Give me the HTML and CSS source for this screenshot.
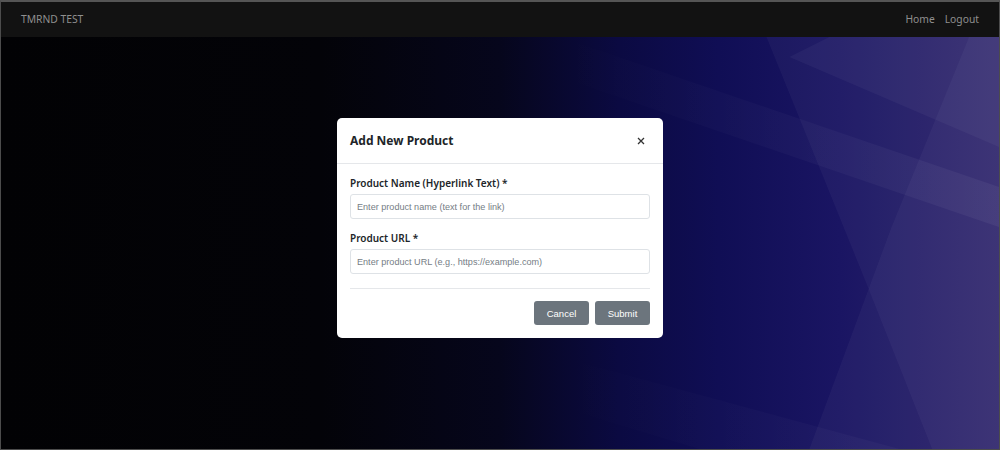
FILE: index.html
```html
<!DOCTYPE html>
<html lang="en">
<head>
  <meta charset="UTF-8">
  <meta name="viewport" content="width=device-width, initial-scale=1.0">
  <title>TMRND TEST - Products</title>
  <link rel="stylesheet" href="styles.css">
</head>
<body>
  <div class="frame">
    <nav class="navbar">
      <a href="#" class="brand">TMRND TEST</a>
      <div class="nav-links">
        <a href="#">Home</a>
        <a href="#">Logout</a>
      </div>
    </nav>
    <main class="stage">
      <!-- decorative background facets -->
      <svg class="facets" viewBox="0 0 1000 412" preserveAspectRatio="none" aria-hidden="true">
        <defs>
          <linearGradient id="fadeLeft" x1="0" y1="0" x2="1" y2="0">
            <stop offset="0" stop-color="#fff" stop-opacity="0"/>
            <stop offset="1" stop-color="#fff" stop-opacity="1"/>
          </linearGradient>
        </defs>
        <polygon points="767,0 1000,0 1000,412 933,412 867,246" fill="#ffffff" opacity="0.035"/>
        <polygon points="970,0 1000,0 1000,412 810,412 892,191" fill="#ffffff" opacity="0.035"/>
        <polygon points="560,0 1000,150 1000,190 560,40" fill="url(#fadeLeft)" opacity="0.05"/>
        <polygon points="830,0 1000,0 1000,110 790,20" fill="#ffffff" opacity="0.04"/>
        <polygon points="560,320 900,412 700,412 560,370" fill="url(#fadeLeft)" opacity="0.03"/>
      </svg>

      <div class="modal">
        <div class="modal-header">
          <h5 class="modal-title">Add New Product</h5>
          <button class="close-btn" aria-label="Close">
            <svg width="8" height="8" viewBox="0 0 8 8"><path d="M1 1L7 7M7 1L1 7" stroke="#333" stroke-width="1.3"/></svg>
          </button>
        </div>
        <form class="modal-body">
          <div class="field">
            <label for="productName">Product Name (Hyperlink Text) *</label>
            <input type="text" id="productName" placeholder="Enter product name (text for the link)">
          </div>
          <div class="field">
            <label for="productUrl">Product URL *</label>
            <input type="text" id="productUrl" placeholder="Enter product URL (e.g., https://example.com)">
          </div>
          <div class="form-actions">
            <button type="button" class="btn">Cancel</button>
            <button type="submit" class="btn">Submit</button>
          </div>
        </form>
      </div>
    </main>
  </div>
</body>
</html>
```

FILE: styles.css
```css
body {
  margin: 0;
  padding: 0;
  font-family: "Noto Sans", "Open Sans", Arial, sans-serif;
  background: #000;
}
.frame {
  width: 1000px;
  height: 450px;
  box-sizing: border-box;
  border: 1px solid #4c4c4c;
  border-top: 2px solid #555;
  display: flex;
  flex-direction: column;
  overflow: hidden;
}
.navbar {
  height: 35px;
  flex-shrink: 0;
  background-color: #121212;
  display: flex;
  align-items: center;
  justify-content: space-between;
  padding: 0 20px;
  line-height: 1;
}
.navbar a {
  text-decoration: none;
  color: #8f8f8f;
  font-size: 10.3px;
}
.nav-links {
  display: flex;
  gap: 10px;
}
.stage {
  position: relative;
  flex: 1;
  display: flex;
  justify-content: center;
  align-items: flex-start;
  padding-top: 81px;
  background: linear-gradient(to right, #020204 0%, #030308 32%, #06061c 50%, #0b0a42 62%, #100e55 72%, #1a1563 84%, #2f266c 100%);
}
.facets {
  position: absolute;
  left: 0;
  top: 0;
  width: 100%;
  height: 100%;
}
.modal {
  position: relative;
  width: 326px;
  background: #fff;
  border-radius: 5px;
}
.modal-header {
  height: 46px;
  box-sizing: border-box;
  display: flex;
  align-items: center;
  justify-content: space-between;
  padding: 0 18px 0 13px;
  border-bottom: 1px solid #e5e7ea;
}
.modal-title {
  margin: 0;
  font-size: 12px;
  font-weight: 700;
  color: #212529;
}
.close-btn {
  background: none;
  border: none;
  padding: 0;
  width: 8px;
  height: 8px;
  display: flex;
  cursor: pointer;
}
.modal-body {
  padding: 12px 13px 13px;
  margin: 0;
}
.field {
  margin-bottom: 12px;
}
.field label {
  display: block;
  font-size: 10px;
  font-weight: 600;
  color: #212529;
  margin-bottom: 4px;
}
.field input {
  display: block;
  width: 100%;
  box-sizing: border-box;
  height: 25px;
  border: 1px solid #dee2e6;
  border-radius: 3px;
  padding: 0 6px;
  font-family: "Liberation Sans", Arial, sans-serif;
  font-size: 9.1px;
}
.field input::placeholder {
  color: #757d85;
}
.form-actions {
  margin-top: 14px;
  border-top: 1px solid #e5e7ea;
  padding-top: 12px;
  display: flex;
  justify-content: flex-end;
  gap: 6px;
}
.btn {
  width: 55px;
  height: 24px;
  background-color: #6c757d;
  color: #fff;
  border: none;
  border-radius: 3px;
  font-family: "Liberation Sans", Arial, sans-serif;
  font-size: 9.5px;
  cursor: pointer;
}
```
